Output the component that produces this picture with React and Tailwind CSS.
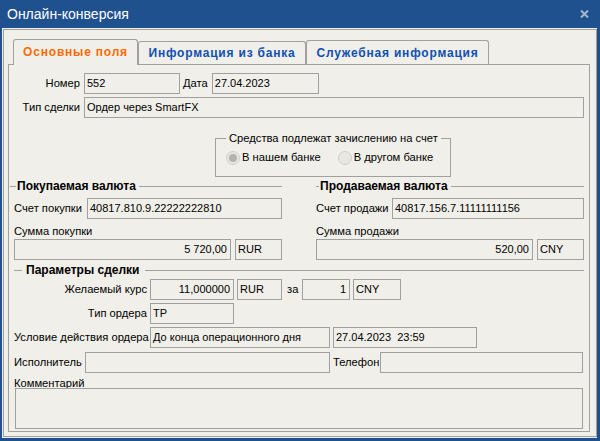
const font = { fontFamily: '"Liberation Sans", Arial, sans-serif' };

const Field = ({ w, value = "", right = false, className = "" }) => (
  <div
    className={`h-[21px] border border-[#a0a0a0] flex items-center px-[2px] text-[11px] leading-none text-black whitespace-pre overflow-hidden ${
      right ? "justify-end pr-[3px]" : ""
    } ${w ? `${w} shrink-0` : "flex-1 min-w-0"} ${className}`}
  >
    {value}
  </div>
);

const Label = ({ children, w, right = false }) => (
  <div
    className={`shrink-0 text-[11.2px] leading-none text-black whitespace-nowrap ${w || ""} ${
      right ? "text-right" : ""
    }`}
  >
    {children}
  </div>
);

const Heading = ({ children, dash, gap = "px-[1px]", className = "" }) => (
  <div className={`flex items-center h-[14px] ${className}`}>
    <div className={`h-px bg-[#a0a0a0] shrink-0 ${dash}`} />
    <div className={`${gap} text-[12px] font-bold leading-none text-black whitespace-nowrap`}>
      {children}
    </div>
    <div className="h-px flex-1 bg-[#a0a0a0] ml-[2px]" />
  </div>
);

const Radio = ({ checked, label }) => (
  <div className="flex items-center gap-[2px]">
    <div className="w-[14px] h-[14px] rounded-full border border-[#d0cec6] bg-[#e9e7e1] flex items-center justify-center">
      {checked && <div className="w-[8px] h-[8px] rounded-full bg-[#b4b3ae]" />}
    </div>
    <span className="text-[11.2px] leading-none text-black whitespace-nowrap">{label}</span>
  </div>
);

export default function App() {
  return (
    <div className="w-[600px] h-[441px] bg-[#20518f] flex flex-col" style={font}>
      {/* title bar */}
      <div className="h-[28px] flex items-center justify-between pl-[7px] pr-[11px]">
        <span className="text-white text-[14px] leading-none">Онлайн-конверсия</span>
        <svg width="9" height="8" viewBox="0 0 9 8">
          <path d="M1 0.5 L8 7.5 M8 0.5 L1 7.5" stroke="#a9b5c9" strokeWidth="2" />
        </svg>
      </div>

      {/* body */}
      <div className="flex-1 ml-[2px] mr-[3px] mb-[3px] bg-[#f1efe9] p-px flex">
        <div className="flex-1 border border-[#a0a0a0] pt-[9px] pl-[4px] pr-[6px] pb-[4px] flex flex-col">
          {/* tabs */}
          <div className="flex items-end pl-[5px] h-[26px] -mb-px relative z-10">
            <div className="w-[125px] h-[26px] border border-b-0 border-[#a0a0a0] rounded-t-[3px] bg-[#f1efe9] flex items-center justify-center pb-[2px]">
              <span className="text-[12px] font-bold tracking-[0.8px] text-[#ff6a00] leading-none">
                Основные поля
              </span>
            </div>
            <div className="w-[168px] h-[23px] mb-px border border-b-0 border-[#a0a0a0] rounded-t-[3px] flex items-center justify-center">
              <span className="text-[12px] font-bold tracking-[0.8px] text-[#1050b0] leading-none">
                Информация из банка
              </span>
            </div>
            <div className="w-[183px] h-[24px] mb-px border border-b-0 border-[#a0a0a0] rounded-t-[3px] flex items-center justify-center">
              <span className="text-[12px] font-bold tracking-[0.8px] text-[#1050b0] leading-none">
                Служебная информация
              </span>
            </div>
          </div>

          {/* panel */}
          <div className="flex-1 border border-[#a0a0a0] px-[5px] pt-[8px] flex flex-col">
            <div className="flex items-center">
              <Label w="w-[66px]" right>Номер</Label>
              <Field w="w-[96px] ml-[4px]" value="552" />
              <Label w="ml-[3px]">Дата</Label>
              <Field w="w-[107px] ml-[4px]" value="27.04.2023" />
            </div>
            <div className="flex items-center mt-[3px]">
              <Label w="w-[66px]" right>Тип сделки</Label>
              <Field className="ml-[4px]" value="Ордер через SmartFX" />
            </div>

            {/* group box */}
            <div className="ml-[201px] w-[236px] h-[39px] mt-[20px] border border-[#a0a0a0] flex flex-col">
              <div className="-mt-[7px] ml-[10px] self-start bg-[#f1efe9] px-[3px] text-[11.2px] leading-[13px] text-black whitespace-nowrap">
                Средства подлежат зачислению на счет
              </div>
              <div className="flex items-center gap-[17px] pl-[10px] mt-[6px]">
                <Radio checked label="В нашем банке" />
                <Radio label="В другом банке" />
              </div>
            </div>

            {/* currencies */}
            <div className="flex gap-[34px] mt-[2px]">
              <div className="w-[268px] flex flex-col">
                <Heading dash="w-[6px] -ml-[4px]">Покупаемая валюта</Heading>
                <div className="flex items-center mt-[5px]">
                  <Label w="w-[73px]">Счет покупки</Label>
                  <Field value="40817.810.9.22222222810" />
                </div>
                <div className="h-[13px] mt-[6px] text-[11.2px] leading-[13px] text-black">Сумма покупки</div>
                <div className="flex mt-px gap-[4px]">
                  <Field right value="5 720,00" />
                  <Field w="w-[47px]" value="RUR" />
                </div>
              </div>
              <div className="w-[268px] flex flex-col">
                <Heading dash="w-[3px]">Продаваемая валюта</Heading>
                <div className="flex items-center mt-[5px]">
                  <Label w="w-[76px]">Счет продажи</Label>
                  <Field value="40817.156.7.11111111156" />
                </div>
                <div className="h-[13px] mt-[6px] text-[11.2px] leading-[13px] text-black">Сумма продажи</div>
                <div className="flex mt-px gap-[4px]">
                  <Field right value="520,00" />
                  <Field w="w-[47px]" value="CNY" />
                </div>
              </div>
            </div>

            <Heading dash="w-[8px]" gap="px-[4px]" className="mt-[3px]">
              Параметры сделки
            </Heading>

            <div className="flex items-center mt-[2px]">
              <Label w="w-[133px]" right>Желаемый курс</Label>
              <Field w="w-[84px] ml-[3px]" right value="11,000000" />
              <Field w="w-[45px] ml-[3px]" value="RUR" />
              <Label w="w-[15px] ml-[5px]">за</Label>
              <Field w="w-[48px]" right value="1" />
              <Field w="w-[48px] ml-[3px]" value="CNY" />
            </div>
            <div className="flex items-center mt-[3px]">
              <Label w="w-[133px]" right>Тип ордера</Label>
              <Field w="w-[84px] ml-[3px]" value="TP" />
            </div>
            <div className="flex items-center mt-[3px]">
              <Label w="w-[133px]" right>Условие действия ордера</Label>
              <Field w="w-[180px] ml-[3px]" value="До конца операционного дня" />
              <Field w="w-[144px] ml-[3px]" value="27.04.2023  23:59" />
            </div>
            <div className="flex items-center mt-[4px]">
              <Label w="w-[71px]">Исполнитель</Label>
              <Field w="w-[245px]" />
              <Label w="w-[47px] ml-[3px]">Телефон</Label>
              <Field className="mr-px" />
            </div>
            <div className="h-[11px] mt-[4px] text-[11.2px] leading-[12px] text-black">Комментарий</div>
            <div className="h-[41px] ml-px mr-px border border-[#a0a0a0]" />
          </div>
        </div>
      </div>
    </div>
  );
}
